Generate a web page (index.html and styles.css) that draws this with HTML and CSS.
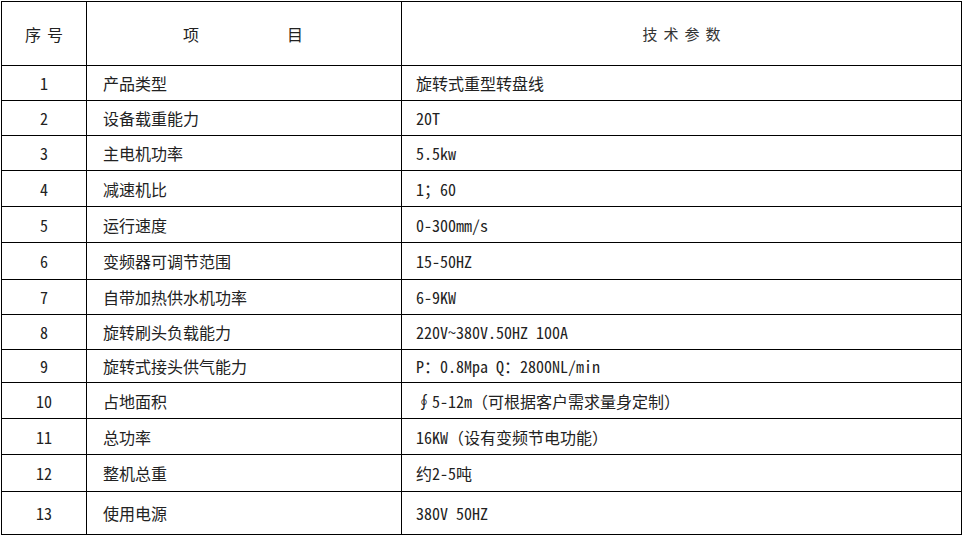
FILE: index.html
```html
<!DOCTYPE html>
<html lang="zh-CN">
<head>
<meta charset="utf-8">
<title>技术参数</title>
<link rel="stylesheet" href="styles.css">
</head>
<body>
<table class="spec">
  <colgroup>
    <col class="c-no">
    <col class="c-item">
    <col class="c-val">
  </colgroup>
  <thead>
    <tr class="h-head">
      <th class="no">序<span class="sp1"></span>号</th>
      <th class="item-h">项<span class="sp2"></span>目</th>
      <th class="val-h">技术参数</th>
    </tr>
  </thead>
  <tbody>
    <tr class="h35"><td class="no">1</td><td class="item">产品类型</td><td class="val">旋转式重型转盘线</td></tr>
    <tr class="h35"><td class="no">2</td><td class="item">设备载重能力</td><td class="val">20T</td></tr>
    <tr class="h35"><td class="no">3</td><td class="item">主电机功率</td><td class="val">5.5kw</td></tr>
    <tr class="h36"><td class="no">4</td><td class="item">减速机比</td><td class="val">1；60</td></tr>
    <tr class="h36"><td class="no">5</td><td class="item">运行速度</td><td class="val">0-300mm/s</td></tr>
    <tr class="h37"><td class="no">6</td><td class="item">变频器可调节范围</td><td class="val">15-50HZ</td></tr>
    <tr class="h35"><td class="no">7</td><td class="item">自带加热供水机功率</td><td class="val">6-9KW</td></tr>
    <tr class="h35"><td class="no">8</td><td class="item">旋转刷头负载能力</td><td class="val">220V~380V.50HZ 100A</td></tr>
    <tr class="h33"><td class="no">9</td><td class="item">旋转式接头供气能力</td><td class="val">P：0.8Mpa Q：2800NL/min</td></tr>
    <tr class="h36"><td class="no">10</td><td class="item">占地面积</td><td class="val">∮5-12m（可根据客户需求量身定制）</td></tr>
    <tr class="h36"><td class="no">11</td><td class="item">总功率</td><td class="val">16KW（设有变频节电功能）</td></tr>
    <tr class="h37"><td class="no">12</td><td class="item">整机总重</td><td class="val">约2-5吨</td></tr>
    <tr class="h43"><td class="no">13</td><td class="item">使用电源</td><td class="val">380V 50HZ</td></tr>
  </tbody>
</table>
</body>
</html>
```
FILE: styles.css
```css
html, body {
  margin: 0;
  padding: 0;
  background: #fff;
}
body {
  padding: 1px 0 0 1px;
  font-family: "Noto Sans Mono CJK SC", "Noto Sans CJK SC", sans-serif;
  font-size: 16px;
  color: #222;
}
.spec {
  border-collapse: collapse;
  table-layout: fixed;
  width: 960px;
}
.c-no { width: 85px; }
.c-item { width: 315px; }
.c-val { width: 560px; }
.spec th,
.spec td {
  border: 1px solid #000;
  padding: 0;
  vertical-align: middle;
  font-weight: normal;
  line-height: 18px;
  white-space: nowrap;
}
.h-head { height: 64px; }
.h33 { height: 33px; }
.h35 { height: 35px; }
.h36 { height: 36px; }
.h37 { height: 37px; }
.h43 { height: 43px; }
.no { text-align: center; }
.item { text-align: left; padding-left: 16px !important; }
.val { text-align: left; padding-left: 14px !important; }
.item-h { text-align: center; padding-right: 2px !important; }
.val-h {
  text-align: center;
  font-size: 15px;
  letter-spacing: 6px;
  padding-left: 6px !important;
  color: #333;
}
.sp1 { display: inline-block; width: 6px; }
.sp2 { display: inline-block; width: 88px; }
```
